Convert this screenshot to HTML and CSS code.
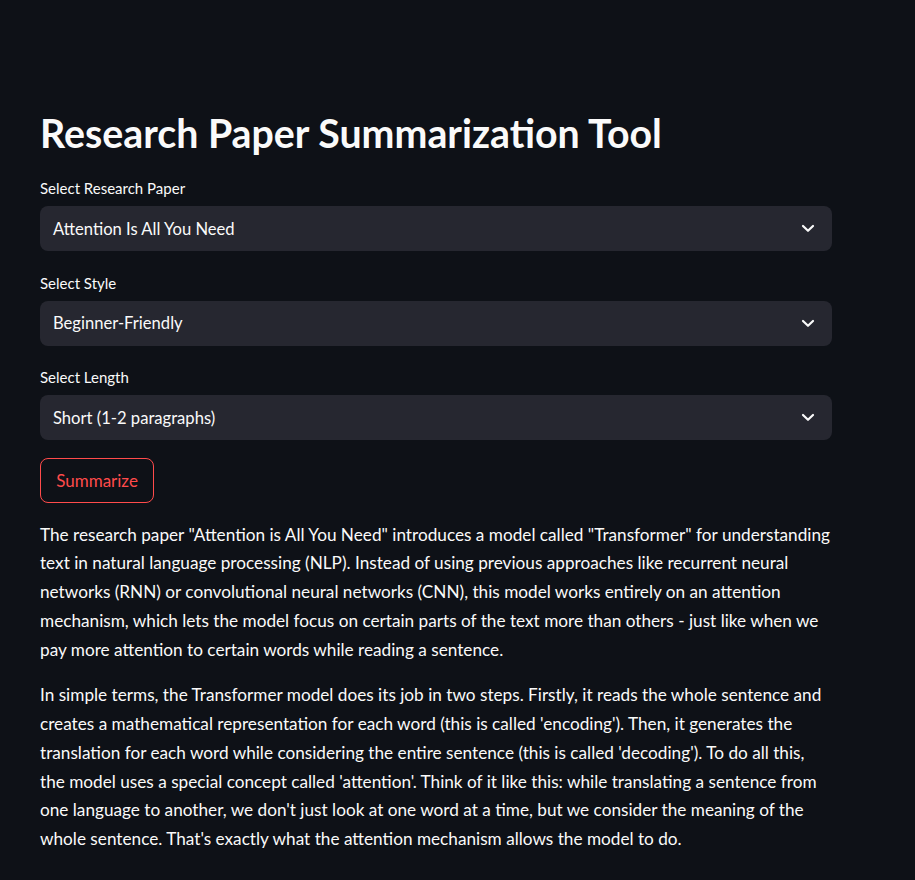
FILE: index.html
```html
<!DOCTYPE html>
<html lang="en">
<head>
<meta charset="utf-8">
<title>Research Paper Summarization Tool</title>
<link rel="stylesheet" href="styles.css">
</head>
<body>
<main class="app">
  <h1 class="title">Research Paper Summarization Tool</h1>

  <div class="field">
    <label class="field-label">Select Research Paper</label>
    <div class="select">
      <span class="select-value">Attention Is All You Need</span>
      <svg class="chevron" width="14" height="9" viewBox="0 0 14 9"><path d="M2 2 L7 6.8 L12 2" fill="none" stroke="#fafafa" stroke-width="2.2" stroke-linecap="round" stroke-linejoin="round"/></svg>
    </div>
  </div>

  <div class="field">
    <label class="field-label">Select Style</label>
    <div class="select">
      <span class="select-value">Beginner-Friendly</span>
      <svg class="chevron" width="14" height="9" viewBox="0 0 14 9"><path d="M2 2 L7 6.8 L12 2" fill="none" stroke="#fafafa" stroke-width="2.2" stroke-linecap="round" stroke-linejoin="round"/></svg>
    </div>
  </div>

  <div class="field">
    <label class="field-label">Select Length</label>
    <div class="select">
      <span class="select-value">Short (1-2 paragraphs)</span>
      <svg class="chevron" width="14" height="9" viewBox="0 0 14 9"><path d="M2 2 L7 6.8 L12 2" fill="none" stroke="#fafafa" stroke-width="2.2" stroke-linecap="round" stroke-linejoin="round"/></svg>
    </div>
  </div>

  <div class="actions">
    <button class="btn">Summarize</button>
  </div>

  <div class="summary">
    <p>The research paper "Attention is All You Need" introduces a model called "Transformer" for understanding text in natural language processing (NLP). Instead of using previous approaches like recurrent neural networks (RNN) or convolutional neural networks (CNN), this model works entirely on an attention mechanism, which lets the model focus on certain parts of the text more than others - just like when we pay more attention to certain words while reading a sentence.</p>
    <p>In simple terms, the Transformer model does its job in two steps. Firstly, it reads the whole sentence and creates a mathematical representation for each word (this is called 'encoding'). Then, it generates the translation for each word while considering the entire sentence (this is called 'decoding'). To do all this, the model uses a special concept called 'attention'. Think of it like this: while translating a sentence from one language to another, we don't just look at one word at a time, but we consider the meaning of the whole sentence. That's exactly what the attention mechanism allows the model to do.</p>
  </div>
</main>
</body>
</html>
```

FILE: styles.css
```css
html, body {
  margin: 0;
  padding: 0;
  background: #0e1117;
  color: #fafafa;
  font-family: Lato, "Noto Sans", sans-serif;
  height: 100%;
  overflow: hidden;
}

.app {
  width: 792px;
  padding: 105px 0 0 40px;
  display: flex;
  flex-direction: column;
}

.title {
  margin: 0 0 16px;
  font-size: 39.3px;
  line-height: 56px;
  font-weight: 700;
}

.field {
  display: flex;
  flex-direction: column;
  margin-bottom: 20.5px;
}

.field-label {
  font-size: 15px;
  line-height: 22px;
  padding-bottom: 7px;
}

.select {
  height: 45px;
  box-sizing: border-box;
  background: #262730;
  border-radius: 8px;
  display: flex;
  align-items: center;
  justify-content: space-between;
  padding: 0 17px 0 13px;
}

.select-value {
  font-size: 16.6px;
}

.chevron {
  display: block;
}

.actions {
  margin-top: -3px;
  margin-bottom: 18px;
}

.btn {
  height: 45px;
  width: 114px;
  box-sizing: border-box;
  background: transparent;
  border: 1px solid #ff4b4b;
  border-radius: 8px;
  color: #ff4b4b;
  font-family: inherit;
  font-size: 17px;
  padding: 0;
}

.summary p {
  margin: 0 0 17px;
  font-size: 17.2px;
  line-height: 28.75px;
}
```
